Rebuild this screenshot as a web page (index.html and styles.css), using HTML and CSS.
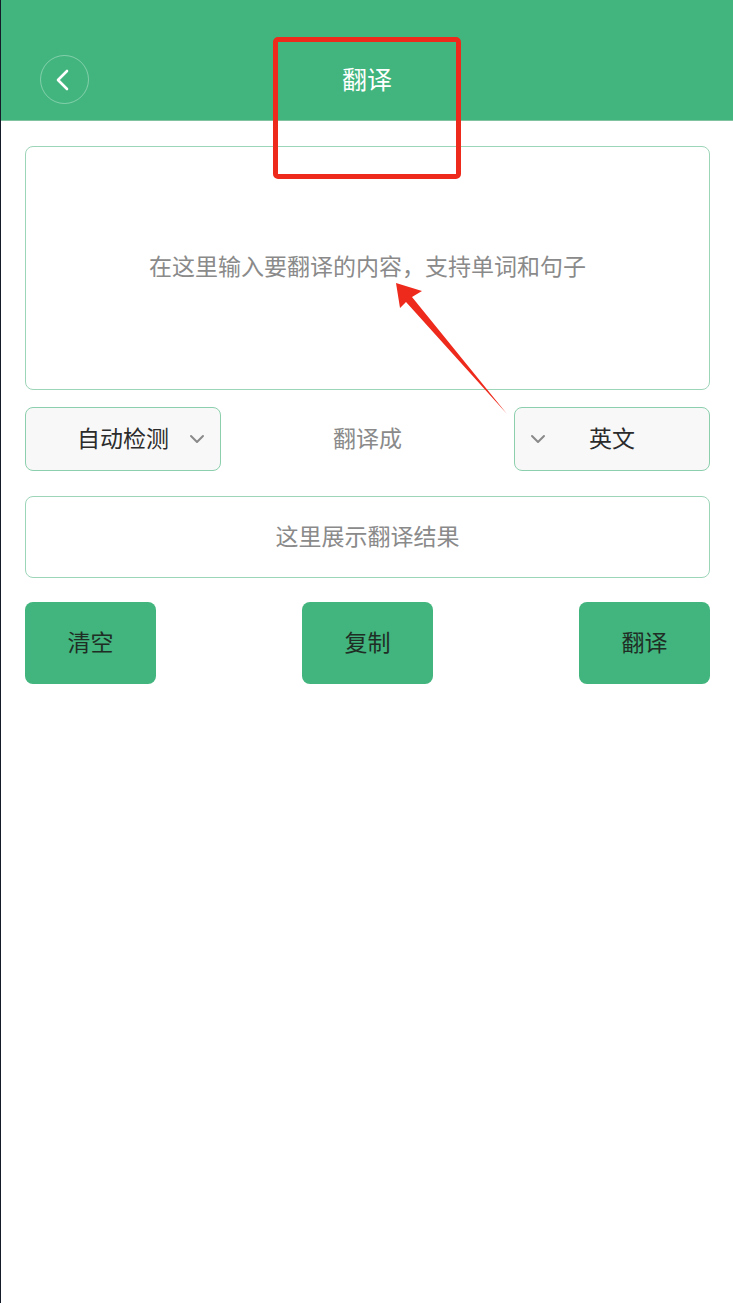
FILE: index.html
```html
<!DOCTYPE html>
<html lang="zh-CN">
<head>
    <meta charset="UTF-8">
    <meta name="viewport" content="width=device-width, initial-scale=1.0">
    <title>翻译</title>
    <link rel="stylesheet" href="styles.css">
</head>
<body>
    <div class="screen">
        <header class="topbar">
            <button class="back-btn" aria-label="返回">
                <svg width="18" height="24" viewBox="0 0 18 24">
                    <polyline points="13,3 4,12 13,21" fill="none" stroke="#fff" stroke-width="2.6" stroke-linecap="round" stroke-linejoin="round"/>
                </svg>
            </button>
            <h1 class="title">翻译</h1>
        </header>

        <main class="content">
            <div class="source-box">在这里输入要翻译的内容，支持单词和句子</div>

            <div class="lang-row">
                <div class="lang-select from">
                    <span>自动检测</span>
                    <svg class="chevron" width="16" height="10" viewBox="0 0 16 10">
                        <polyline points="2,2 8,8 14,2" fill="none" stroke="#8a8a8a" stroke-width="2" stroke-linecap="round" stroke-linejoin="round"/>
                    </svg>
                </div>
                <div class="lang-to">翻译成</div>
                <div class="lang-select to">
                    <svg class="chevron" width="16" height="10" viewBox="0 0 16 10">
                        <polyline points="2,2 8,8 14,2" fill="none" stroke="#8a8a8a" stroke-width="2" stroke-linecap="round" stroke-linejoin="round"/>
                    </svg>
                    <span>英文</span>
                </div>
            </div>

            <div class="result-box">这里展示翻译结果</div>

            <div class="actions">
                <button class="action-btn">清空</button>
                <button class="action-btn">复制</button>
                <button class="action-btn">翻译</button>
            </div>
        </main>

        <!-- annotation overlays -->
        <div class="mark-box"></div>
        <svg class="mark-arrow" width="733" height="500" viewBox="0 0 733 500">
            <polygon points="396,283 422,291 412,297 507,414 406,302 400,308" fill="#ee2a1c"/>
        </svg>
    </div>
</body>
</html>
```

FILE: styles.css
```css
* {
    box-sizing: border-box;
}
body {
    margin: 0;
    font-family: "Noto Sans CJK SC", "Noto Sans", sans-serif;
    background: #fff;
}
.screen {
    position: relative;
    width: 733px;
    min-height: 1303px;
    border-left: 1px solid #151b28;
    background: #fff;
}
.topbar {
    height: 121px;
    background: #41b57d;
    border-bottom: 1px solid #7fc3a0;
    display: flex;
    align-items: center;
    justify-content: center;
    position: relative;
    padding-top: 36px;
}
.back-btn {
    position: absolute;
    left: 39px;
    top: 55px;
    width: 49px;
    height: 49px;
    border-radius: 50%;
    border: 1px solid rgba(255, 255, 255, 0.35);
    background: transparent;
    display: flex;
    align-items: center;
    justify-content: center;
    padding: 0 3px 0 0;
}
.title {
    margin: 0;
    color: #fff;
    font-size: 25px;
    font-weight: 400;
    line-height: 1;
}
.content {
    padding: 25px 23px 0 24px;
    font-size: 23px;
    line-height: 1;
}
.source-box {
    height: 244px;
    border: 1px solid #9dd5b9;
    border-radius: 8px;
    display: flex;
    align-items: center;
    justify-content: center;
    color: #8a8a8a;
    padding-bottom: 5px;
}
.lang-row {
    display: flex;
    align-items: center;
    justify-content: space-between;
    margin-top: 17px;
}
.lang-select {
    position: relative;
    width: 196px;
    height: 64px;
    background: #f8f8f8;
    border: 1px solid #8ccfae;
    border-radius: 8px;
    display: flex;
    align-items: center;
    justify-content: center;
    color: #2b2b2b;
    padding-bottom: 4px;
}
.lang-select .chevron {
    position: absolute;
    top: 26px;
}
.lang-select.from .chevron {
    right: 15px;
}
.lang-select.to .chevron {
    left: 15px;
}
.lang-to {
    color: #8a8a8a;
    padding-bottom: 4px;
}
.result-box {
    margin-top: 25px;
    height: 82px;
    border: 1px solid #9dd5b9;
    border-radius: 8px;
    display: flex;
    align-items: center;
    justify-content: center;
    color: #8a8a8a;
    padding-bottom: 4px;
}
.actions {
    display: flex;
    justify-content: space-between;
    margin-top: 24px;
}
.action-btn {
    width: 131px;
    height: 82px;
    border: none;
    border-radius: 8px;
    background: #41b57d;
    color: #1f2d25;
    font-family: inherit;
    font-size: 23px;
    line-height: 1;
    padding: 0 0 4px;
}
.mark-box {
    position: absolute;
    left: 272px;
    top: 37px;
    width: 188px;
    height: 142px;
    border: 5px solid #ee2a1c;
    border-radius: 5px;
}
.mark-arrow {
    position: absolute;
    left: -1px;
    top: 0;
    pointer-events: none;
}
```
